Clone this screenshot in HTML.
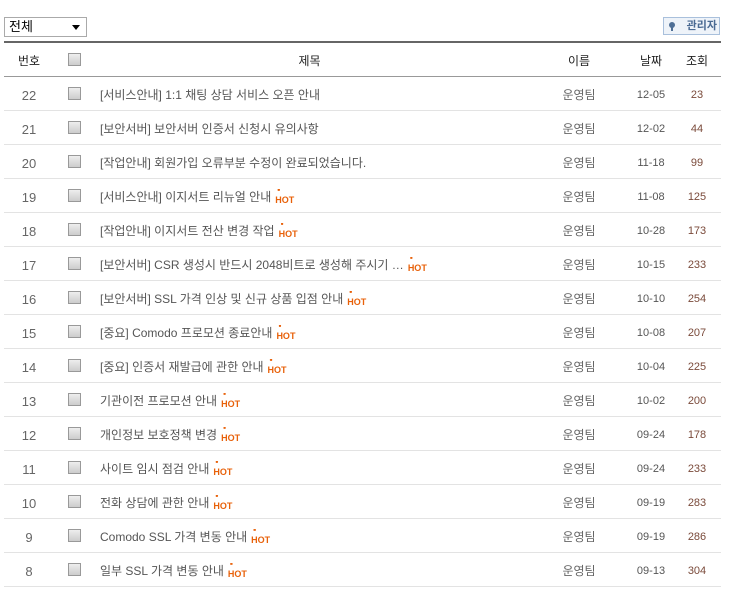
<!DOCTYPE html>
<html><head><meta charset="utf-8"><style>
body{margin:0;background:#fff;font-family:"Liberation Sans","Noto Sans CJK KR",sans-serif;color:#555;font-size:12px;}
.sel{position:absolute;left:4px;top:17px;width:77px;height:18px;border:1px solid #aaa;font-size:13px;color:#000;line-height:18px;padding-left:4px;box-sizing:content-box}
.sel:after{content:"";position:absolute;right:6px;top:7px;border-left:4px solid transparent;border-right:4px solid transparent;border-top:5px solid #000}
.adm{position:absolute;left:663px;top:17px;width:57px;height:18px;border:1px solid #a9c0dc;background:#eef3f9;font-size:11px;font-weight:bold;color:#4a6a93;line-height:17px;text-align:right;padding-right:2px;box-sizing:border-box}
.adm i{position:absolute;left:5px;top:4px;width:6px;height:6px;border-radius:50%;background:#4f6f96}
.adm i:after{content:"";position:absolute;left:2px;top:5px;width:2px;height:4px;background:#4f6f96}
.tbl{position:absolute;left:4px;top:41px;width:717px;border-top:2px solid #666}
.row{position:relative;height:33px;border-bottom:1px solid #e3e3e3}
.hd{height:33px;border-bottom:1px solid #999;color:#222;font-size:12px}
.row div{position:absolute;top:2px;line-height:33px}
.n{left:0;width:50px;text-align:center;font-size:13px;color:#666}
.row .cb{left:64px;top:10px;width:11px;height:11px;border:1px solid #999;background:linear-gradient(#eee,#ccc)}
.t{left:96px;font-size:12px;color:#555}
.nm{left:540px;width:70px;text-align:center;color:#666}
.d{left:625px;width:44px;text-align:center;font-size:11px}
.v{left:675px;width:36px;text-align:center;font-size:11px;color:#7a4a3a}
.hd .t{left:0;width:611px;text-align:center;color:#222}
.hd .n,.hd .d,.hd .v,.hd .nm{color:#222;font-size:12px}
.hot{display:inline-block;position:relative;font-size:9px;font-weight:bold;color:#e8610a;margin-left:4px;vertical-align:-2px;line-height:10px;font-family:"Liberation Sans",sans-serif}
.hot:before{content:"'''";position:absolute;left:2px;top:-7px;font-size:7px;color:#e8610a;letter-spacing:-1px}
</style></head><body>
<div class="sel">전체</div>
<div class="adm"><i></i>관리자</div>
<div class="tbl">
<div class="row hd"><div class="n">번호</div><div class="cb"></div><div class="t">제목</div><div class="nm">이름</div><div class="d">날짜</div><div class="v">조회</div></div>
<div class="row"><div class="n">22</div><div class="cb"></div><div class="t">[서비스안내] 1:1 채팅 상담 서비스 오픈 안내</div><div class="nm">운영팀</div><div class="d">12-05</div><div class="v">23</div></div>
<div class="row"><div class="n">21</div><div class="cb"></div><div class="t">[보안서버] 보안서버 인증서 신청시 유의사항</div><div class="nm">운영팀</div><div class="d">12-02</div><div class="v">44</div></div>
<div class="row"><div class="n">20</div><div class="cb"></div><div class="t">[작업안내] 회원가입 오류부분 수정이 완료되었습니다.</div><div class="nm">운영팀</div><div class="d">11-18</div><div class="v">99</div></div>
<div class="row"><div class="n">19</div><div class="cb"></div><div class="t">[서비스안내] 이지서트 리뉴얼 안내<span class="hot">HOT</span></div><div class="nm">운영팀</div><div class="d">11-08</div><div class="v">125</div></div>
<div class="row"><div class="n">18</div><div class="cb"></div><div class="t">[작업안내] 이지서트 전산 변경 작업<span class="hot">HOT</span></div><div class="nm">운영팀</div><div class="d">10-28</div><div class="v">173</div></div>
<div class="row"><div class="n">17</div><div class="cb"></div><div class="t">[보안서버] CSR 생성시 반드시 2048비트로 생성해 주시기 …<span class="hot">HOT</span></div><div class="nm">운영팀</div><div class="d">10-15</div><div class="v">233</div></div>
<div class="row"><div class="n">16</div><div class="cb"></div><div class="t">[보안서버] SSL 가격 인상 및 신규 상품 입점 안내<span class="hot">HOT</span></div><div class="nm">운영팀</div><div class="d">10-10</div><div class="v">254</div></div>
<div class="row"><div class="n">15</div><div class="cb"></div><div class="t">[중요] Comodo 프로모션 종료안내<span class="hot">HOT</span></div><div class="nm">운영팀</div><div class="d">10-08</div><div class="v">207</div></div>
<div class="row"><div class="n">14</div><div class="cb"></div><div class="t">[중요] 인증서 재발급에 관한 안내<span class="hot">HOT</span></div><div class="nm">운영팀</div><div class="d">10-04</div><div class="v">225</div></div>
<div class="row"><div class="n">13</div><div class="cb"></div><div class="t">기관이전 프로모션 안내<span class="hot">HOT</span></div><div class="nm">운영팀</div><div class="d">10-02</div><div class="v">200</div></div>
<div class="row"><div class="n">12</div><div class="cb"></div><div class="t">개인정보 보호정책 변경<span class="hot">HOT</span></div><div class="nm">운영팀</div><div class="d">09-24</div><div class="v">178</div></div>
<div class="row"><div class="n">11</div><div class="cb"></div><div class="t">사이트 임시 점검 안내<span class="hot">HOT</span></div><div class="nm">운영팀</div><div class="d">09-24</div><div class="v">233</div></div>
<div class="row"><div class="n">10</div><div class="cb"></div><div class="t">전화 상담에 관한 안내<span class="hot">HOT</span></div><div class="nm">운영팀</div><div class="d">09-19</div><div class="v">283</div></div>
<div class="row"><div class="n">9</div><div class="cb"></div><div class="t">Comodo SSL 가격 변동 안내<span class="hot">HOT</span></div><div class="nm">운영팀</div><div class="d">09-19</div><div class="v">286</div></div>
<div class="row"><div class="n">8</div><div class="cb"></div><div class="t">일부 SSL 가격 변동 안내<span class="hot">HOT</span></div><div class="nm">운영팀</div><div class="d">09-13</div><div class="v">304</div></div>
</div>
</body></html>
